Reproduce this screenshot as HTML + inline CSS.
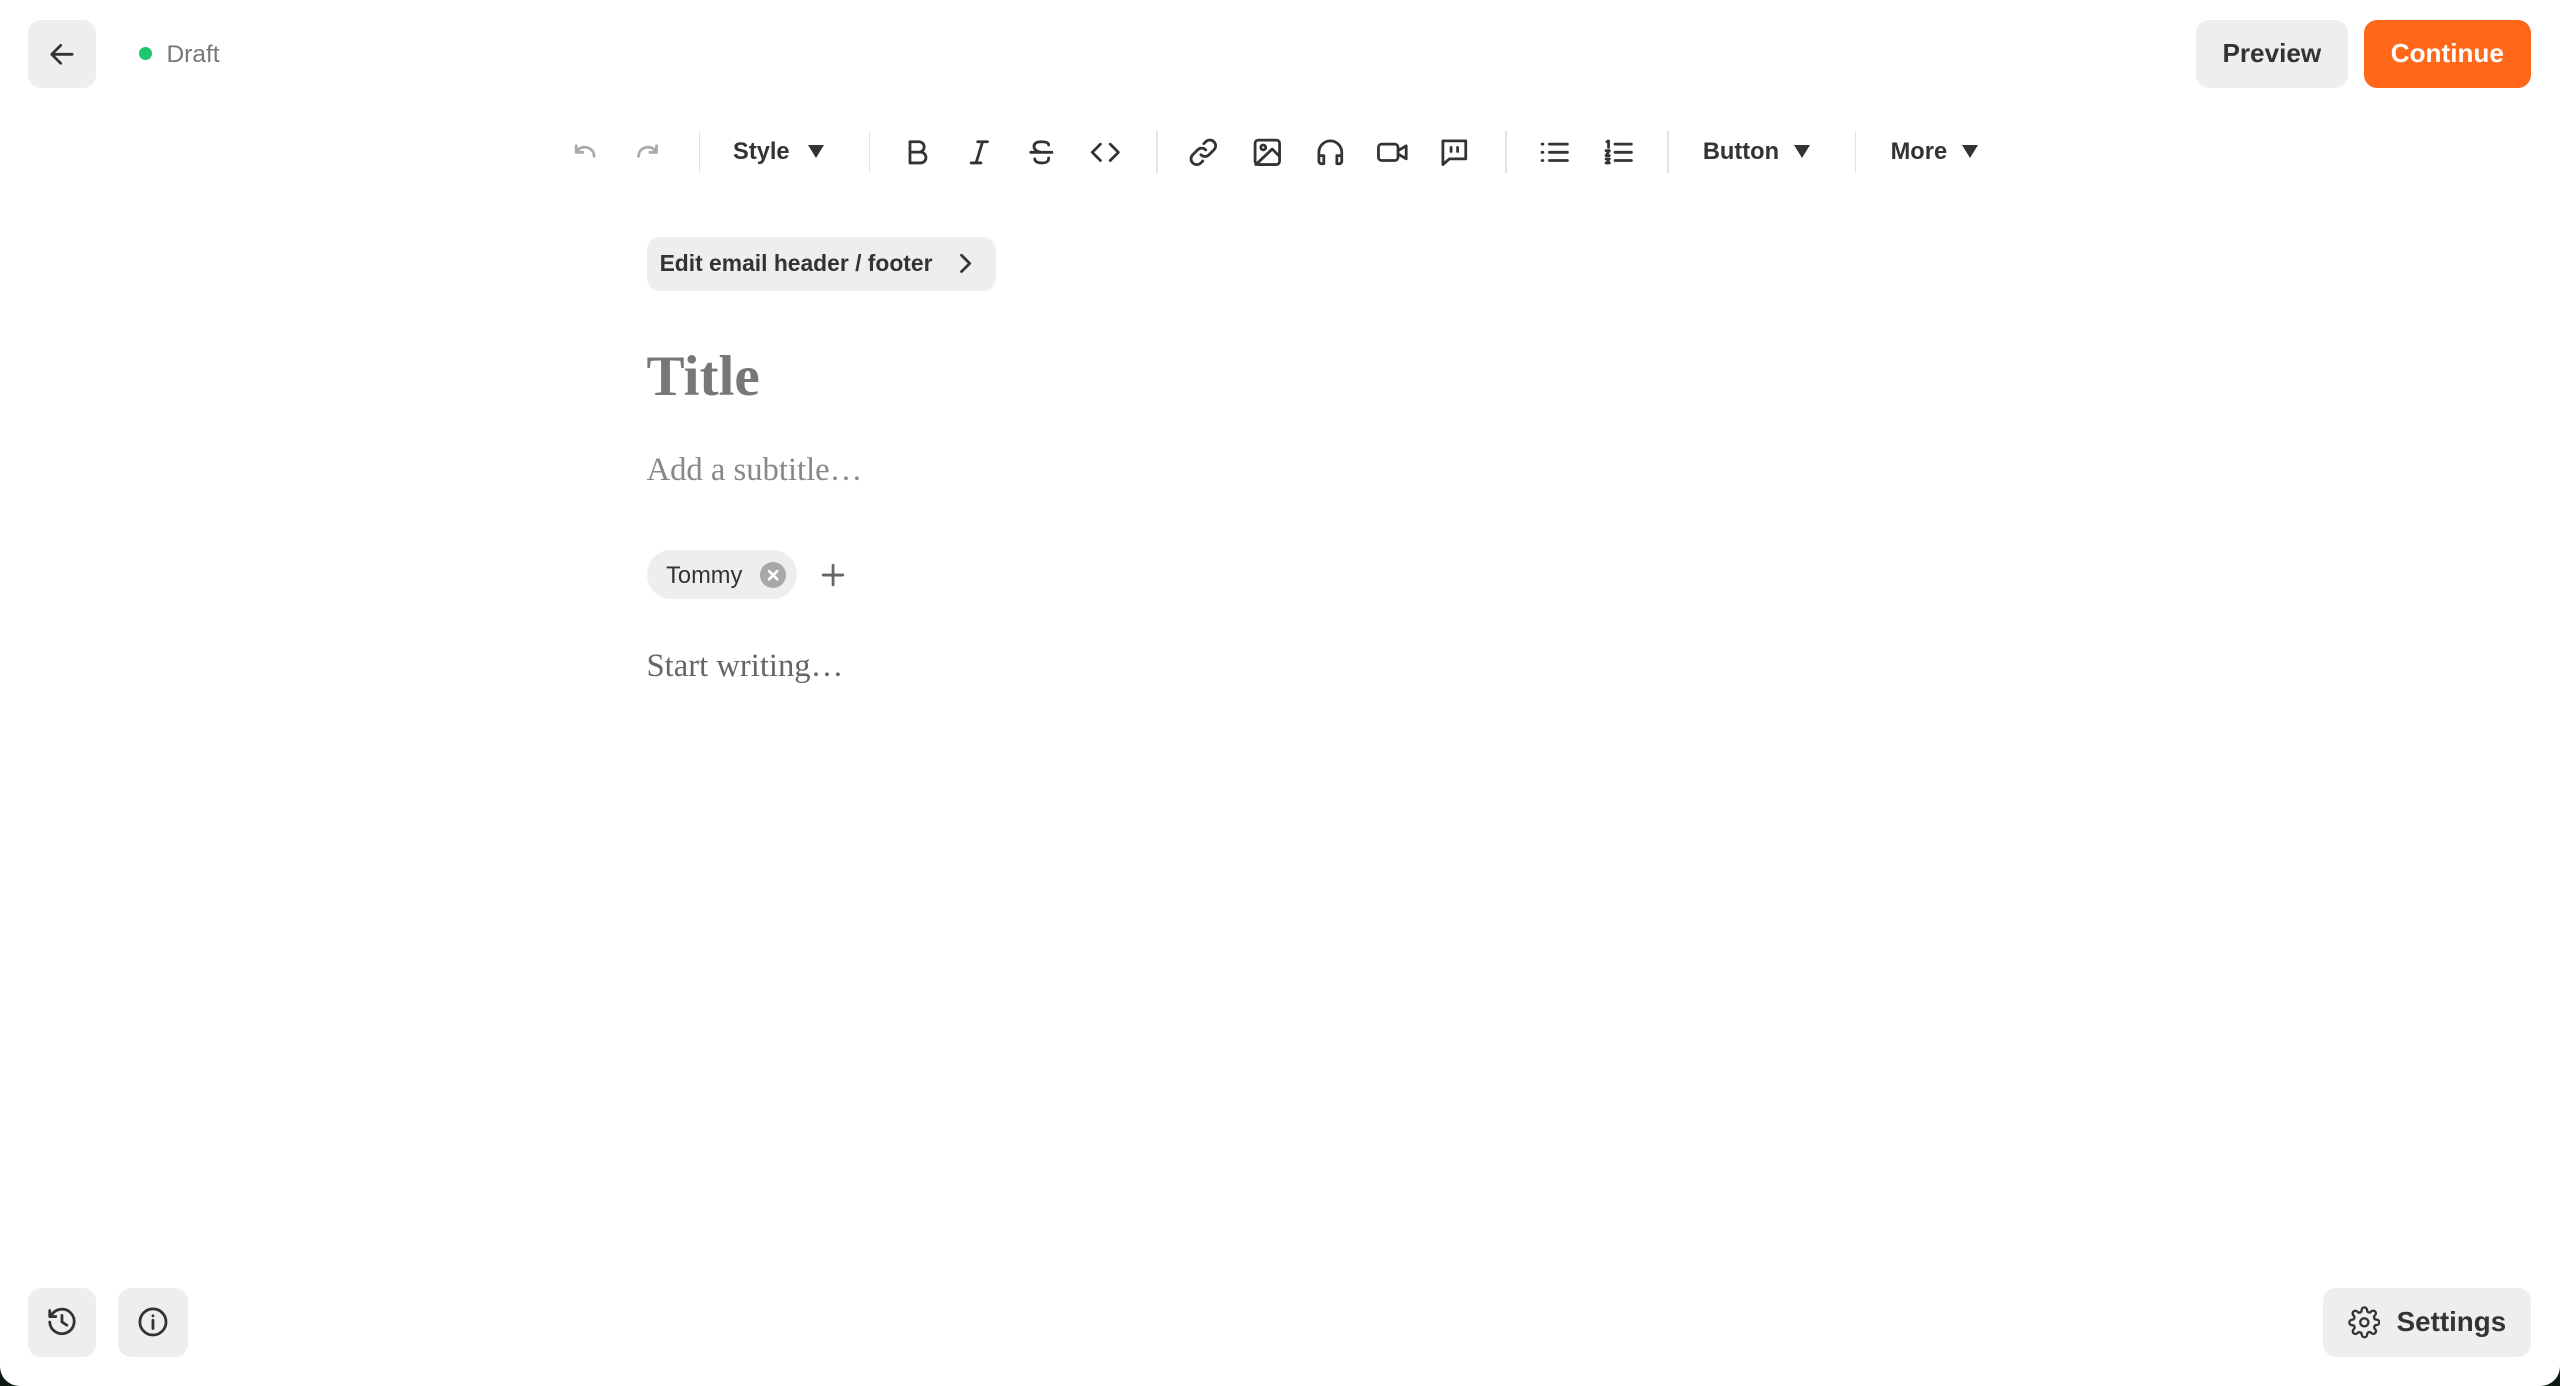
<!DOCTYPE html>
<html><head><meta charset="utf-8"><style>
html,body{margin:0;padding:0;width:2560px;height:1386px;overflow:hidden;background:#0f1a10}
#w{zoom:1.63265;width:1568px;height:849px;position:relative;background:#fff;border-radius:0 0 12px 12px;font-family:"Liberation Sans",sans-serif;color:#333}
.a{position:absolute}
.btn{position:absolute;background:#eeeeee;border-radius:8px;display:flex;align-items:center;justify-content:center}
svg{display:block}
.t{stroke:#333;stroke-width:1.7;fill:none;stroke-linecap:round;stroke-linejoin:round}
.sep{position:absolute;top:80px;width:1px;height:26px;background:#e3e3e3}
.lbl{position:absolute;top:85px;font-size:14.5px;font-weight:bold;color:#333}
.tri{position:absolute;top:89px;width:0;height:0;border-left:5px solid transparent;border-right:5px solid transparent;border-top:8px solid #333}
.serif{font-family:"Liberation Serif",serif}
</style></head><body><div id="w">
<div class="btn" style="left:17px;top:12px;width:42px;height:42px"><svg width="20" height="20" viewBox="0 0 20 20"><path class="t" d="M16 10H4M9 4.5 3.5 10 9 15.5"/></svg></div>
<div class="a" style="left:85px;top:29px;width:8px;height:8px;border-radius:50%;background:#1fc46e"></div>
<div class="a" style="left:102px;top:25px;font-size:15px;color:#777">Draft</div>
<div class="btn" style="left:1345px;top:12px;width:93px;height:42px;font-size:16px;font-weight:bold;color:#333">Preview</div>
<div class="btn" style="left:1448px;top:12px;width:102px;height:42px;background:#ff6719;font-size:16px;font-weight:bold;color:#fff">Continue</div>

<svg class="a" style="left:348px;top:83px" width="20" height="20" viewBox="0 0 20 20"><path class="t" style="stroke:#aaa" d="M5 6v4h4M5 10c1.5-3 5-4 8-2.5 2 1 3 3 3 5"/></svg>
<svg class="a" style="left:387px;top:83px" width="20" height="20" viewBox="0 0 20 20"><path class="t" style="stroke:#aaa" d="M15 6v4h-4M15 10c-1.5-3-5-4-8-2.5-2 1-3 3-3 5"/></svg>
<div class="sep" style="left:428px"></div>
<div class="lbl" style="left:449px">Style</div><div class="tri" style="left:495px"></div>
<div class="sep" style="left:532px"></div>
<svg class="a" style="left:552px;top:83px" width="20" height="20" viewBox="0 0 20 20"><path class="t" d="M5.5 3.5h5.5a3.2 3.2 0 0 1 0 6.4H5.5zM5.5 9.9h6.5a3.3 3.3 0 0 1 0 6.6H5.5z"/></svg>
<svg class="a" style="left:590px;top:83px" width="20" height="20" viewBox="0 0 20 20"><path class="t" d="M9 3.5h6M5 16.5h6M12 3.5 8 16.5"/></svg>
<svg class="a" style="left:628px;top:83px" width="20" height="20" viewBox="0 0 20 20"><path class="t" d="M3.5 10h13M14.5 5.5c0-1.5-1.5-2-4.5-2s-4.5 1-4.5 3 2 3 4.5 3.5M6 14c0 1.5 1.5 2.5 4.5 2.5s4-1 4-3"/></svg>
<svg class="a" style="left:667px;top:83px" width="20" height="20" viewBox="0 0 20 20"><path class="t" d="M7 5 2 10l5 5M13 5l5 5-5 5"/></svg>
<div class="sep" style="left:708px"></div>
<svg class="a" style="left:727px;top:83px" width="20" height="20" viewBox="0 0 20 20"><path class="t" d="M8.5 11.5a3.5 3.5 0 0 0 5 0l3-3a3.5 3.5 0 0 0-5-5l-1.2 1.2M11.5 8.5a3.5 3.5 0 0 0-5 0l-3 3a3.5 3.5 0 0 0 5 5l1.2-1.2"/></svg>
<svg class="a" style="left:766px;top:83px" width="20" height="20" viewBox="0 0 20 20"><rect class="t" x="2.5" y="2.5" width="15" height="15" rx="2"/><circle class="t" cx="7.5" cy="7" r="1.5"/><path class="t" d="M17.5 12.5 13 8 3 17.5"/></svg>
<svg class="a" style="left:805px;top:83px" width="20" height="20" viewBox="0 0 20 20"><path class="t" d="M3 15v-5a7 7 0 0 1 14 0v5M3 12h3v5H4.5A1.5 1.5 0 0 1 3 15.5zM17 12h-3v5h1.5a1.5 1.5 0 0 0 1.5-1.5z"/></svg>
<svg class="a" style="left:843px;top:83px" width="20" height="20" viewBox="0 0 20 20"><rect class="t" x="1.5" y="5" width="12" height="10" rx="2"/><path class="t" d="m13.5 9 5-3v8l-5-3"/></svg>
<svg class="a" style="left:881px;top:83px" width="20" height="20" viewBox="0 0 20 20"><path class="t" d="M3 3h14v11H7l-4 3.5zM8 7v2.5M12 7v2.5"/></svg>
<div class="sep" style="left:922px"></div>
<svg class="a" style="left:942px;top:83px" width="20" height="20" viewBox="0 0 20 20"><path class="t" d="M7 5h11M7 10h11M7 15h11M2.5 5h.5M2.5 10h.5M2.5 15h.5"/></svg>
<svg class="a" style="left:981px;top:83px" width="20" height="20" viewBox="0 0 20 20"><path class="t" d="M8 5h10M8 10h10M8 15h10M3 3.5 4 3v4M2.5 9h2L2.5 12h2M2.5 14h2l-1 1.2 1 1.3h-2"/></svg>
<div class="sep" style="left:1021px"></div>
<div class="lbl" style="left:1043px">Button</div><div class="tri" style="left:1099px"></div>
<div class="sep" style="left:1136px"></div>
<div class="lbl" style="left:1158px">More</div><div class="tri" style="left:1202px"></div>

<div class="btn" style="left:396px;top:145px;width:214px;height:33px;justify-content:flex-start;padding-left:8px;box-sizing:border-box;font-size:14px;font-weight:bold;color:#333">Edit email header / footer<svg style="margin-left:14px" width="12" height="14" viewBox="0 0 12 14"><path class="t" d="m4 2 5 5-5 5"/></svg></div>
<div class="a serif" style="left:396px;top:211px;font-size:35px;font-weight:bold;color:#777">Title</div>
<div class="a serif" style="left:396px;top:277px;font-size:20px;color:#888">Add a subtitle…</div>
<div class="btn" style="left:396px;top:337px;width:92px;height:30px;border-radius:15px;justify-content:flex-start;padding-left:12px;box-sizing:border-box;font-size:14.5px;color:#333"><span style="position:relative;top:1px">Tommy</span><span style="margin-left:11px;width:16px;height:16px;border-radius:50%;background:#a8a8a8;display:inline-flex;align-items:center;justify-content:center"><svg width="10" height="10" viewBox="0 0 10 10"><path d="M2.5 2.5l5 5M7.5 2.5l-5 5" stroke="#fff" stroke-width="1.6" stroke-linecap="round"/></svg></span></div>
<svg class="a" style="left:502px;top:344px" width="16" height="16" viewBox="0 0 16 16"><path class="t" style="stroke:#666" d="M8 2v12M2 8h12"/></svg>
<div class="a serif" style="left:396px;top:397px;font-size:20px;color:#666">Start writing…</div>

<div class="btn" style="left:17px;top:789px;width:42px;height:42px"><svg width="22" height="22" viewBox="0 0 22 22"><path class="t" d="M4.2 7.5A7.5 7.5 0 1 1 3.5 11M3.5 4v3.7h3.7M11 7v4l3 2"/></svg></div>
<div class="btn" style="left:72px;top:789px;width:43px;height:42px"><svg width="22" height="22" viewBox="0 0 22 22"><circle class="t" cx="11" cy="11" r="8"/><path class="t" d="M11 10v5M11 7.2v.1"/></svg></div>
<div class="btn" style="left:1423px;top:789px;width:127px;height:42px;font-size:17px;font-weight:bold;color:#333"><svg style="margin-right:10px" width="20" height="20" viewBox="0 0 24 24"><circle class="t" cx="12" cy="12" r="3"/><path class="t" d="M19.4 15a1.7 1.7 0 0 0 .3 1.8l.1.1a2 2 0 1 1-2.8 2.8l-.1-.1a1.7 1.7 0 0 0-1.8-.3 1.7 1.7 0 0 0-1 1.5V21a2 2 0 1 1-4 0v-.1a1.7 1.7 0 0 0-1.1-1.5 1.7 1.7 0 0 0-1.8.3l-.1.1a2 2 0 1 1-2.8-2.8l.1-.1a1.7 1.7 0 0 0 .3-1.8 1.7 1.7 0 0 0-1.5-1H3a2 2 0 1 1 0-4h.1a1.7 1.7 0 0 0 1.5-1.1 1.7 1.7 0 0 0-.3-1.8l-.1-.1a2 2 0 1 1 2.8-2.8l.1.1a1.7 1.7 0 0 0 1.8.3H9a1.7 1.7 0 0 0 1-1.5V3a2 2 0 1 1 4 0v.1a1.7 1.7 0 0 0 1 1.5 1.7 1.7 0 0 0 1.8-.3l.1-.1a2 2 0 1 1 2.8 2.8l-.1.1a1.7 1.7 0 0 0-.3 1.8V9a1.7 1.7 0 0 0 1.5 1H21a2 2 0 1 1 0 4h-.1a1.7 1.7 0 0 0-1.5 1z"/></svg>Settings</div>
</div></body></html>
